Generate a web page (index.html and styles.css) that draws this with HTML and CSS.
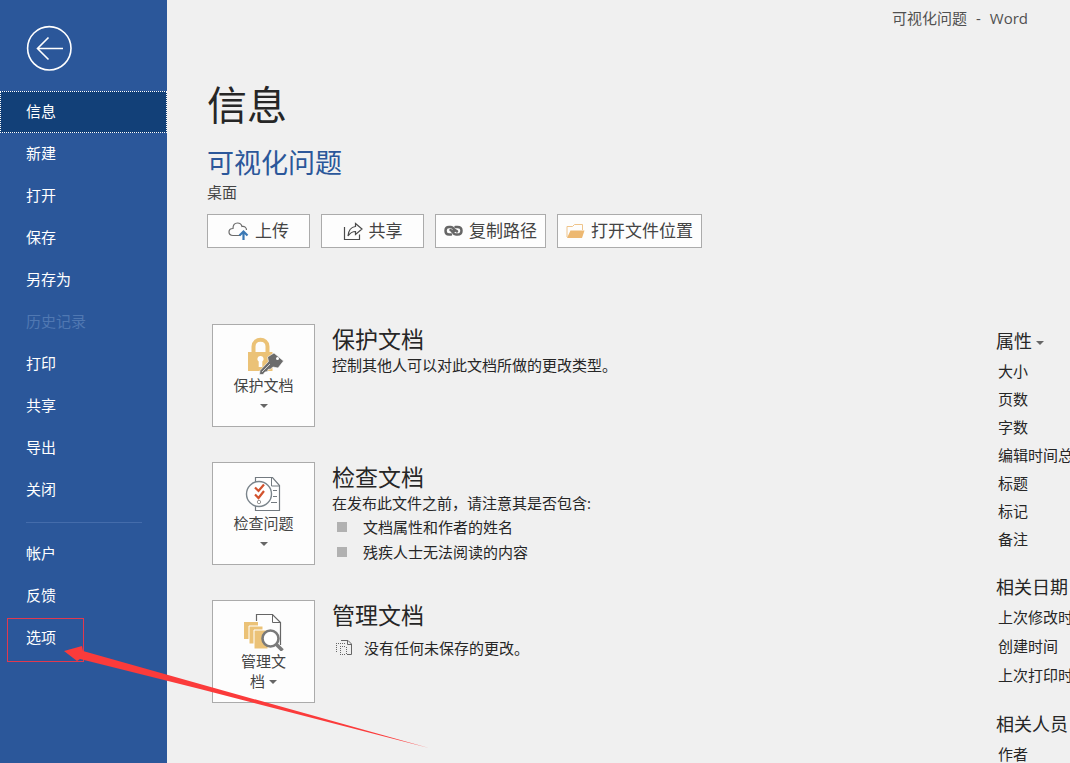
FILE: index.html
```html
<!DOCTYPE html>
<html lang="zh-CN">
<head>
<meta charset="utf-8">
<title>可视化问题 - Word</title>
<link rel="stylesheet" href="styles.css">
</head>
<body>
<div class="backstage">
  <aside class="sidebar">
    <button class="back" aria-label="返回">
      <svg width="46" height="46" viewBox="0 0 46 46" fill="none" stroke="#fff" stroke-width="1.6"><circle cx="23.300" cy="23.300" r="21.700"/><path d="M37 23.500H12M22.500 12.500L11.500 23.500L22.500 34.500"/></svg>
    </button>
    <nav class="nav">
      <button class="nav-item active">信息</button>
      <button class="nav-item">新建</button>
      <button class="nav-item">打开</button>
      <button class="nav-item">保存</button>
      <button class="nav-item">另存为</button>
      <button class="nav-item" disabled>历史记录</button>
      <button class="nav-item">打印</button>
      <button class="nav-item">共享</button>
      <button class="nav-item">导出</button>
      <button class="nav-item">关闭</button>
      <hr class="divider">
      <button class="nav-item">帐户</button>
      <button class="nav-item">反馈</button>
      <button class="nav-item">选项</button>
    </nav>
  </aside>
  <main class="main">
    <div class="titlebar"><span>可视化问题</span><span>-</span><span>Word</span></div>
    <h1 class="page-title">信息</h1>
    <h2 class="doc-title">可视化问题</h2>
    <p class="doc-path">桌面</p>
    <div class="actions">
      <button class="action">
        <svg width="21" height="20" viewBox="0 0 21 20" fill="none"><path d="M12 14.500H5C2.500 14.500 1 13 1 11S2.500 7.500 5 7.500C5 4 7 2 9.500 2C12 2 13.500 3.500 14 5.500C16.500 5 18.500 6.500 18.500 9" stroke="#6a6a6a" stroke-width="1.200"/><path d="M15.500 19V11M11.500 14.500L15.500 10.500L19.500 14.500" stroke="#3a78b5" stroke-width="2.200"/></svg>
        上传
      </button>
      <button class="action">
        <svg width="20" height="20" viewBox="0 0 20 20" fill="none" stroke="#4a4a4a" stroke-width="1.200"><path d="M1.500 6V18.500H16.500V13.500"/><path d="M12.500 2.500L19 8L12.500 13.500V10.500C9 10.500 7 12 5 15C5.500 9.500 8 6 12.500 5.500Z"/></svg>
        共享
      </button>
      <button class="action">
        <svg width="19" height="20" viewBox="0 0 19 20" fill="none" stroke="#666" stroke-width="2.500" stroke-linecap="round"><path d="M7 13.500H5C3 13.500 1.500 12 1.500 9.700S3 6 5 6H6.500C8.500 6 9.500 7 10.300 9C10.700 10.300 9.500 11 8.500 10.400L6.500 9"/><path d="M11.500 6H13.500C16 6 17.500 7.500 17.500 9.700S16 13.500 13.500 13.500H12C10.500 13.500 9.500 12.800 8.500 11M13 10.400L10.500 8.700"/></svg>
        复制路径
      </button>
      <button class="action">
        <svg width="19" height="20" viewBox="0 0 19 20"><path d="M1 16V5.500H6.500L8.500 3.500H16.500V9" fill="none" stroke="#efc48a"/><path d="M1 17L4.500 9.500H18.500L16 17Z" fill="#edb871"/></svg>
        打开文件位置
      </button>
    </div>
    <div class="columns">
      <div class="sections">
        <section class="section">
          <button class="tile">
            <svg width="40" height="40" viewBox="-1 -1 40 40"><path d="M8.500 16V10.500C8.500 1.500 22.500 1.500 22.500 10.500V16" fill="none" stroke="#ebc277" stroke-width="4"/><path d="M3 16H27.500V35H3Z" fill="#ebc277"/><path d="M15.500 20A3 3 0 0 1 17.300 25.500V31H13.700V25.500A3 3 0 0 1 15.500 20Z" fill="#fff"/><path d="M14.500 38.500L15 34.500L23.500 25.500L22.500 21L29 17L38.500 25L33 32L28 31L25.500 33L23 33.500L22.500 35.500L20 36L18 38.500Z" fill="#6c6c6c" stroke="#fff" stroke-width=".6"/><circle cx="32.500" cy="22.500" r="1.500" fill="#fff"/><path d="M17 36L25 28" stroke="#fff" stroke-width=".7"/></svg>
            <span class="tile-label">保护文档</span>
            <span class="caret"></span>
          </button>
          <div class="section-text">
            <h3 class="section-title">保护文档</h3>
            <p class="section-note">控制其他人可以对此文档所做的更改类型。</p>
          </div>
        </section>
        <section class="section">
          <button class="tile">
            <svg width="40" height="40" viewBox="-1 0 40 40" fill="none"><path d="M10.500 4.500H27.500L34.500 12.500V37.500H10.500Z" fill="#fff" stroke="#737a80" stroke-width="1.200"/><path d="M26.500 4.500V13H34M28 17.500H32M28 23.500H32M26 29.500H32" stroke="#737a80"/><circle cx="14" cy="21" r="12.500" fill="#fff" stroke="#7b858c" stroke-width="1.400"/><path d="M10 14.500L13.500 18L19 11.500M10 21.500L13.500 25L19 18" stroke="#d2522d" stroke-width="2.200"/><circle cx="14" cy="29" r="1.700" stroke="#999"/></svg>
            <span class="tile-label">检查问题</span>
            <span class="caret"></span>
          </button>
          <div class="section-text">
            <h3 class="section-title">检查文档</h3>
            <p class="section-note">在发布此文件之前，请注意其是否包含:</p>
            <ul class="checks">
              <li class="check">文档属性和作者的姓名</li>
              <li class="check">残疾人士无法阅读的内容</li>
            </ul>
          </div>
        </section>
        <section class="section">
          <button class="tile">
            <svg width="40" height="40" viewBox="0 0 40 40" fill="none"><path d="M12.500 10V3.500H28.500L36.500 11.500V34" stroke="#666" stroke-width="1.200"/><path d="M28.500 3.500V11.500H36.500" stroke="#666"/><path d="M0 11H14V28H0Z" fill="#ebc277"/><path d="M5 15H19V33H5Z" fill="#ebc277" stroke="#fff"/><path d="M10 19H24V38H10Z" fill="#ebc277" stroke="#fff"/><circle cx="26.500" cy="27.500" r="8" fill="#fff" stroke="#7a7a7a" stroke-width="2.600"/><path d="M32 33L38.500 39.500" stroke="#7a7a7a" stroke-width="3.600"/></svg>
            <span class="tile-label">管理文<br>档<span class="caret inline"></span></span>
          </button>
          <div class="section-text">
            <h3 class="section-title">管理文档</h3>
            <p class="unsaved">
              <svg width="18" height="18" viewBox="0 0 18 18" fill="none" stroke="#666"><path d="M6 1.500H13L16.500 5V15.500H12M12.500 1.500V5.500H16.500"/><path d="M1.500 4V14M1 4.500H10M5.500 7V16M5 7.500H11M5 15.500H11M11.500 8V16" stroke-dasharray="1 1"/></svg>
              没有任何未保存的更改。
            </p>
          </div>
        </section>
      </div>
      <div class="properties">
        <div class="group">
          <h4 class="group-title">属性<span class="caret inline"></span></h4>
          <ul class="props">
            <li>大小</li><li>页数</li><li>字数</li><li>编辑时间总</li><li>标题</li><li>标记</li><li>备注</li>
          </ul>
        </div>
        <div class="group">
          <h4 class="group-title">相关日期</h4>
          <ul class="props loose">
            <li>上次修改时</li><li>创建时间</li><li>上次打印时</li>
          </ul>
        </div>
        <div class="group">
          <h4 class="group-title">相关人员</h4>
          <ul class="props"><li>作者</li></ul>
        </div>
      </div>
    </div>
  </main>
  <svg class="callout" width="440" height="140" viewBox="0 0 440 140"><rect x="7.500" y="8.500" width="76" height="43" fill="none" stroke="#e0394f"/><path d="M64 41L82 36L83 41L200 74L429 138L200 79L80 49L77 51Z" fill="#fb3b3b"/></svg>
</div>
</body>
</html>
```
FILE: styles.css
```css
* { box-sizing: border-box; }
body, h1, h2, h3, h4, p, ul { margin: 0; padding: 0; font-weight: 400; }
ul { list-style: none; }
body {
  font-family: "Open Sans", "Noto Sans CJK SC", sans-serif;
  font-size: 15px;
  line-height: 22px;
  color: #262626;
  background: #f0f0f0;
}
button {
  font: inherit;
  color: inherit;
  border: 0;
  padding: 0;
  background: none;
}
.backstage {
  position: relative;
  display: flex;
  height: 100vh;
  overflow: hidden;
}
.sidebar {
  flex: 0 0 167px;
  background: #2b579a;
  color: #fff;
}
.back {
  display: block;
  margin: 25px 0 20px 26px;
  height: 46px;
}
.back svg { display: block; }
.nav { display: flex; flex-direction: column; }
.nav-item {
  height: 42px;
  padding: 0 0 2px 26px;
  text-align: left;
}
.nav-item.active {
  background: #124078;
  border: 1px dotted #fff;
  padding-left: 25px;
}
.nav-item:disabled { color: #5078b2; }
.divider {
  width: 116px;
  height: 1px;
  margin: 11px 0 10px 26px;
  border: 0;
  background: #446cab;
}
.main {
  flex: 1;
  min-width: 0;
  padding-left: 40px;
}
.titlebar {
  display: flex;
  justify-content: flex-end;
  gap: 9px;
  line-height: 36px;
  padding-right: 42px;
  color: #505050;
}
.page-title {
  margin-top: 41px;
  font-size: 40px;
  line-height: 56px;
}
.doc-title {
  margin-top: 12px;
  font-size: 27px;
  line-height: 36px;
  color: #2b579a;
}
.doc-path { color: #444; }
.actions {
  display: flex;
  gap: 11px;
  margin-top: 11px;
}
.action {
  display: flex;
  align-items: center;
  justify-content: center;
  gap: 6px;
  height: 34px;
  min-width: 103px;
  padding: 0 8px;
  border: 1px solid #ababab;
  background: #fdfdfd;
  color: #444;
  font-size: 17px;
}
.columns {
  display: grid;
  grid-template-columns: 1fr 74px;
  margin-top: 76px;
}
.sections {
  display: flex;
  flex-direction: column;
  gap: 35px;
  padding-left: 5px;
}
.section { display: flex; gap: 17px; height: 103px; }
.tile {
  display: flex;
  flex-direction: column;
  align-items: center;
  flex: 0 0 103px;
  padding-top: 10px;
  border: 1px solid #ababab;
  background: #fdfdfd;
  color: #444;
}
.tile-label { line-height: 20px; }
.caret {
  margin-top: 9px;
  border: 4px solid transparent;
  border-top-color: #666;
  border-bottom: 0;
}
.caret.inline {
  display: inline-block;
  margin: 0 0 3px 4px;
}
.section-title { font-size: 23px; line-height: 30px; }
.check {
  display: flex;
  align-items: center;
  gap: 16px;
  padding-left: 5px;
  height: 25px;
}
.check::before {
  content: "";
  width: 10px;
  height: 10px;
  background: #b1b1b1;
}
.unsaved {
  display: flex;
  align-items: center;
  gap: 11px;
  margin-top: 7px;
  padding-left: 3px;
}
.properties {
  display: flex;
  flex-direction: column;
  gap: 18px;
  padding-top: 1px;
  white-space: nowrap;
}
.group-title { font-size: 18px; line-height: 32px; }
.props { padding-left: 2px; line-height: 28px; }
.props.loose { line-height: 29px; }
.callout {
  position: absolute;
  left: 0;
  top: 610px;
  pointer-events: none;
}
```
